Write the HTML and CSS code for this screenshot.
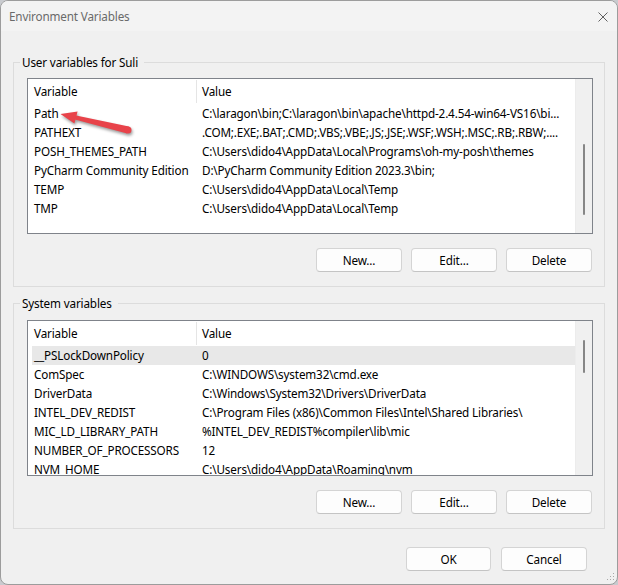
FILE: index.html
```html
<!DOCTYPE html>
<html>
<head>
<meta charset="utf-8">
<link rel="stylesheet" href="styles.css">
</head>
<body>
<div class="window">
  <div class="titlebar">
    <span class="title">Environment Variables</span>
    <svg class="close" width="10" height="10" viewBox="0 0 10 10"><path d="M0.5 0.5L9.5 9.5M9.5 0.5L0.5 9.5" stroke="#5f5f5f" stroke-width="1" fill="none"/></svg>
  </div>
  <div class="content">
    <fieldset class="group">
      <legend>User variables for Suli</legend>
      <div class="list">
        <div class="table">
          <div class="row head"><span class="c1">Variable</span><span class="c2">Value</span></div>
          <div class="row"><span class="c1">Path</span><span class="c2">C:\laragon\bin;C:\laragon\bin\apache\httpd-2.4.54-win64-VS16\bi...</span></div>
          <div class="row"><span class="c1">PATHEXT</span><span class="c2">.COM;.EXE;.BAT;.CMD;.VBS;.VBE;.JS;.JSE;.WSF;.WSH;.MSC;.RB;.RBW;....</span></div>
          <div class="row"><span class="c1">POSH_THEMES_PATH</span><span class="c2">C:\Users\dido4\AppData\Local\Programs\oh-my-posh\themes</span></div>
          <div class="row"><span class="c1">PyCharm Community Edition</span><span class="c2">D:\PyCharm Community Edition 2023.3\bin;</span></div>
          <div class="row"><span class="c1">TEMP</span><span class="c2">C:\Users\dido4\AppData\Local\Temp</span></div>
          <div class="row"><span class="c1">TMP</span><span class="c2">C:\Users\dido4\AppData\Local\Temp</span></div>
        </div>
        <div class="scroll"><div class="thumb" style="margin-top:65px;height:71px"></div></div>
      </div>
      <div class="btns">
        <button class="btn">New...</button>
        <button class="btn">Edit...</button>
        <button class="btn">Delete</button>
      </div>
    </fieldset>
    <fieldset class="group group2">
      <legend>System variables</legend>
      <div class="list">
        <div class="table">
          <div class="row head"><span class="c1">Variable</span><span class="c2">Value</span></div>
          <div class="row sel"><span class="c1">__PSLockDownPolicy</span><span class="c2">0</span></div>
          <div class="row"><span class="c1">ComSpec</span><span class="c2">C:\WINDOWS\system32\cmd.exe</span></div>
          <div class="row"><span class="c1">DriverData</span><span class="c2">C:\Windows\System32\Drivers\DriverData</span></div>
          <div class="row"><span class="c1">INTEL_DEV_REDIST</span><span class="c2">C:\Program Files (x86)\Common Files\Intel\Shared Libraries\</span></div>
          <div class="row"><span class="c1">MIC_LD_LIBRARY_PATH</span><span class="c2">%INTEL_DEV_REDIST%compiler\lib\mic</span></div>
          <div class="row"><span class="c1">NUMBER_OF_PROCESSORS</span><span class="c2">12</span></div>
          <div class="row"><span class="c1">NVM_HOME</span><span class="c2">C:\Users\dido4\AppData\Roaming\nvm</span></div>
        </div>
        <div class="scroll"><div class="thumb" style="margin-top:19px;height:33px"></div></div>
      </div>
      <div class="btns">
        <button class="btn">New...</button>
        <button class="btn">Edit...</button>
        <button class="btn">Delete</button>
      </div>
    </fieldset>
    <div class="dialog-btns">
      <button class="btn btn-ok">OK</button>
      <button class="btn">Cancel</button>
    </div>
  </div>
  <svg class="arrow" width="100" height="40" viewBox="0 0 100 40">
    <g fill="#e8434a">
      <polygon points="20.5,14 37.6,11.4 34.4,23.6"/>
      <polygon points="36.1,15.4 88.85,26.6 87.15,33.4 34.9,19.6"/>
      <circle cx="88" cy="30" r="3.5"/>
    </g>
  </svg>
  <svg class="grip" width="10" height="10" viewBox="0 0 10 10">
    <g fill="#a8a8a8">
      <rect x="7" y="1" width="1" height="1"/>
      <rect x="4" y="4" width="1" height="1"/>
      <rect x="7" y="4" width="1" height="1"/>
      <rect x="1" y="7" width="1" height="1"/>
      <rect x="4" y="7" width="1" height="1"/>
      <rect x="7" y="7" width="1" height="1"/>
    </g>
  </svg>
</div>
</body>
</html>
```

FILE: styles.css
```css
* { box-sizing: border-box; }
html, body {
  margin: 0;
  padding: 0;
  background: #c9cbcf;
}
body {
  font-family: "Noto Sans", "Open Sans", sans-serif;
  font-size: 11.7px;
  letter-spacing: -0.15px;
  color: #000;
}
.window {
  position: relative;
  width: 618px;
  height: 585px;
  background: #f0f0f0;
  border: 1px solid #9c9c9c;
  border-radius: 8px;
  overflow: hidden;
}
.titlebar {
  height: 30px;
  background: #f3f3f3;
  display: flex;
  align-items: center;
  justify-content: space-between;
  padding: 0 9px 0 8px;
}
.title {
  color: #6a6a6a;
  line-height: 16px;
}
.close { display: block; margin-top: 1px; }
.content {
  display: flex;
  flex-direction: column;
}
.group {
  margin: 23px 12px 0;
  padding: 0 11px 14px 13px;
  border: 1px solid #dcdcdc;
  min-width: 0;
}
.group2 { margin-top: 8px; }
.group2 .list { margin-top: 9px; }
.group legend {
  line-height: 16px;
  padding: 0 6px 0 2px;
  margin-left: -7px;
  color: #000;
}
.list {
  margin-top: 8px;
  height: 156px;
  border: 1px solid #7f838a;
  background: #fff;
  display: flex;
  overflow: hidden;
}
.table {
  flex: 1;
  min-width: 0;
  overflow: hidden;
}
.row {
  display: flex;
  height: 19px;
  line-height: 19px;
  margin-left: 4px;
  white-space: nowrap;
}
.row.head {
  height: 25px;
  line-height: 25px;
}
.row.sel { background: #e8e8e8; }
.c1 {
  width: 164px;
  flex: none;
  padding-left: 2px;
  overflow: hidden;
}
.c2 {
  flex: 1;
  padding-left: 6px;
  overflow: hidden;
}
.head .c2 {
  border-left: 1px solid #e5e5e5;
  padding-left: 5px;
  margin-top: 1px;
  line-height: 23px;
  height: 23px;
}
.scroll {
  width: 17px;
  flex: none;
  background: #f0f0f0;
  border-left: 1px solid #ececec;
  display: flex;
  flex-direction: column;
  align-items: center;
}
.thumb {
  width: 2px;
  border-radius: 1px;
  background: #868686;
}
.btns {
  display: flex;
  justify-content: flex-end;
  gap: 9px;
  margin-top: 14px;
  padding-right: 1px;
}
.btn {
  width: 86px;
  height: 24px;
  padding: 0;
  font-family: "Noto Sans", "Open Sans", sans-serif;
  font-size: 11.7px;
  letter-spacing: -0.15px;
  color: #000;
  background: #fdfdfd;
  border: 1px solid #d4d4d4;
  border-bottom-color: #c4c4c4;
  border-radius: 4px;
}
.dialog-btns {
  display: flex;
  justify-content: flex-end;
  gap: 10px;
  margin: 18px 30px 0 0;
}
.btn-ok { width: 85px; }
.arrow {
  position: absolute;
  left: 39px;
  top: 99px;
  filter: drop-shadow(1px 2px 1.5px rgba(0,0,0,0.4));
}
.grip {
  position: absolute;
  right: 1px;
  bottom: 2px;
}
```
